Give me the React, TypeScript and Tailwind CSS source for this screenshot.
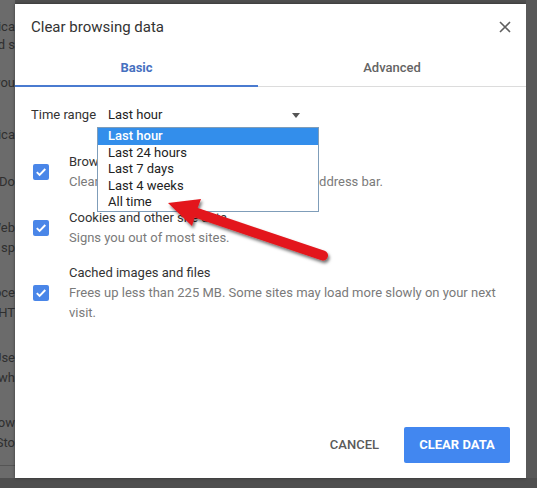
import React from 'react';

const bgFragments = [
  { text: 'devica', cls: 'mt-[17px]' },
  { text: 'and s', cls: 'mt-[-2px]' },
  { text: 'you', cls: 'mt-[18px]' },
  { text: 'devica', cls: 'mt-[32px]' },
  { text: 'Do', cls: 'mt-[27px]' },
  { text: 'Web', cls: 'mt-[26px]' },
  { text: 'sp', cls: 'mt-0' },
  { text: 'Proce', cls: 'mt-[25px]' },
  { text: 'HT', cls: 'mt-0' },
  { text: 'Use', cls: 'mt-[25px]' },
  { text: 'wh', cls: 'mt-0' },
  { text: 'Brow', cls: 'mt-[25px]' },
  { text: 'Sto', cls: 'mt-0' },
];

const ranges = ['Last hour', 'Last 24 hours', 'Last 7 days', 'Last 4 weeks', 'All time'];

function Checkbox() {
  return (
    <div className="mr-[20px] flex h-[16px] w-[16px] shrink-0 items-center justify-center rounded-[2px] bg-[#4a86e8]">
      <svg width="12" height="12" viewBox="0 0 12 12">
        <path d="M1.8 6.2 L4.6 9 L10.3 3" fill="none" stroke="white" strokeWidth="1.9" />
      </svg>
    </div>
  );
}

function Item({ title, desc, cls }: { title: string; desc: React.ReactNode; cls: string }) {
  return (
    <div className={`flex items-center pl-[18px] ${cls}`}>
      <Checkbox />
      <div className="text-[13px] leading-[20px]">
        <div className="text-[#333]">{title}</div>
        <div className="text-[#7a7a7a]">{desc}</div>
      </div>
    </div>
  );
}

export default function App() {
  return (
    <div className="relative flex h-[488px] w-[537px] overflow-hidden bg-[#4f4f4f] font-['Roboto',sans-serif]">
      {/* dimmed page behind the dialog */}
      <div className="flex h-[478px] w-[15px] shrink-0 flex-col overflow-hidden bg-[#6b6b6b] text-[13px] leading-[20px] text-[#2f2f2f]">
        {bgFragments.map((f, i) => (
          <div key={i} className={`flex justify-end whitespace-nowrap ${f.cls}`}>
            {f.text}
          </div>
        ))}
        <div className="mt-[12px] h-px bg-[#555]" />
      </div>

      <div className="mt-[4px] flex h-[474px] w-[511px] shrink-0 flex-col bg-white shadow-[0_0_3px_rgba(0,0,0,0.45)]">
        <div className="flex h-[46px] items-center justify-between pl-[16px] pr-[15px]">
          <div className="text-[15px] text-[#333]">Clear browsing data</div>
          <svg width="12" height="12" viewBox="0 0 12 12">
            <path d="M1 1 L11 11 M11 1 L1 11" stroke="#5f5f5f" strokeWidth="1.6" />
          </svg>
        </div>

        <div className="flex h-[37px] border-b border-[#dcdcdc]">
          <div className="-mb-px flex w-[243px] items-center justify-center border-b-2 border-[#4a7bd0] text-[13px] font-bold text-[#4670bf]">
            Basic
          </div>
          <div className="flex flex-1 items-center justify-center text-[13px] font-medium text-[#646464]">
            Advanced
          </div>
        </div>

        <div className="mt-[18px] flex h-[20px] items-center pl-[16px] text-[13px]">
          <div className="w-[73px] text-[#333]">Time range</div>
          <div className="relative flex h-[20px] w-[204px] items-center justify-between pl-[4px] pr-[8px] text-[#222]">
            <span>Last hour</span>
            <svg width="8" height="5" viewBox="0 0 8 5">
              <path d="M0 0 H8 L4 5 Z" fill="#555" />
            </svg>
            <div className="absolute left-[-7px] top-[22px] z-10 w-[222px] border border-[#7f9db9] bg-white">
              {ranges.map((r, i) => (
                <div
                  key={r}
                  className={
                    i === 0
                      ? 'h-[16.5px] bg-[#338eeb] pl-[10px] font-medium leading-[16.5px] text-white'
                      : 'h-[16.5px] pl-[10px] leading-[16.5px] text-[#222]'
                  }
                >
                  {r}
                </div>
              ))}
            </div>
          </div>
        </div>

        <Item
          cls="mt-[27px]"
          title="Browsing history"
          desc="Clears history and autocompletions in the address bar."
        />
        <Item cls="mt-[16px]" title="Cookies and other site data" desc="Signs you out of most sites." />
        <Item
          cls="mt-[15px]"
          title="Cached images and files"
          desc={
            <>
              Frees up less than 225 MB. Some sites may load more slowly on your next
              <br />
              visit.
            </>
          }
        />

        <div className="mt-auto flex items-center justify-end gap-[9px] pb-[15px] pr-[16px]">
          <button className="h-[36px] px-[16px] text-[13px] font-medium text-[#5a5a5a]">CANCEL</button>
          <button className="h-[36px] w-[106px] rounded-[2px] bg-[#4287f0] text-[13px] font-bold text-white">
            CLEAR DATA
          </button>
        </div>
      </div>

      <div className="h-[478px] flex-1 bg-[#585858]" />

      {/* annotation arrow drawn over the screenshot */}
      <svg className="pointer-events-none absolute inset-0 z-20" width="537" height="488" viewBox="0 0 537 488">
        <defs>
          <filter id="sh" x="-20%" y="-20%" width="140%" height="140%">
            <feDropShadow dx="1.5" dy="2.5" stdDeviation="1.8" floodColor="#000" floodOpacity="0.55" />
          </filter>
        </defs>
        <g filter="url(#sh)">
          <line x1="194" y1="212" x2="323" y2="255.5" stroke="#e3161b" strokeWidth="10" strokeLinecap="round" />
          <path d="M168 203 L201 199 L196 212.5 L192 226 Z" fill="#e3161b" />
        </g>
      </svg>
    </div>
  );
}
